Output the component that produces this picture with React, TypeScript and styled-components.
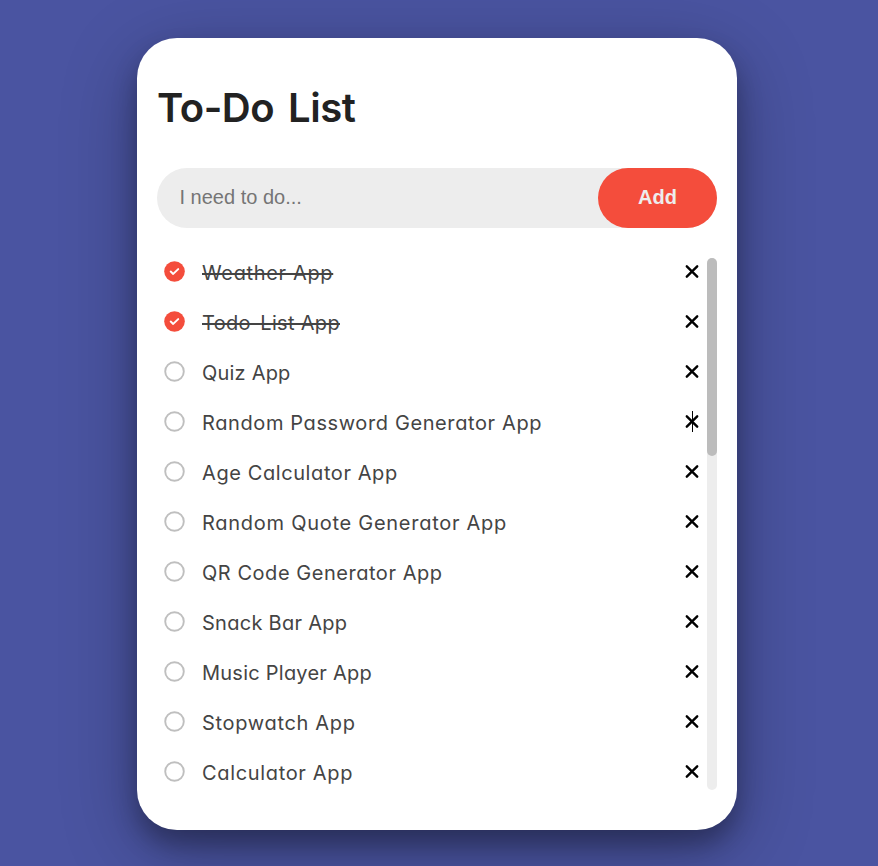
import React from "react";
import styled, { createGlobalStyle } from "styled-components";

const GlobalStyle = createGlobalStyle`
  * { box-sizing: border-box; }
  body { margin: 0; background: #4a54a1; overflow: hidden; }
`;

const Page = styled.main`
  height: 866px;
  padding-top: 38px;
  padding-left: 137px;
  background: #4a54a1;
  overflow: hidden;
  font-family: Inter, sans-serif;
  font-feature-settings: "cv11", "ss03";
`;

const Card = styled.section`
  width: 600px;
  height: 792px;
  padding: 40px 20px;
  display: flex;
  flex-direction: column;
  border-radius: 40px;
  background: #fff;
  box-shadow: 0 19px 76px rgba(0, 0, 0, 0.3), 0 15px 24px rgba(0, 0, 0, 0.27);
`;

const Title = styled.h1`
  margin: 0 0 30px;
  height: 60px;
  color: #222;
  font-size: 40px;
  line-height: 60px;
  font-weight: 600;
  letter-spacing: -0.5px;
  word-spacing: 4.5px;
  white-space: nowrap;
`;

const Form = styled.form`
  display: flex;
  flex: none;
  height: 60px;
  border-radius: 30px;
  background: #ededed;
`;

const TaskInput = styled.input`
  flex: 1;
  min-width: 0;
  padding: 0 0 2px 22.5px;
  border: 0;
  outline: 0;
  background: transparent;
  font: 20px "Liberation Sans", Arial, sans-serif;
  &::placeholder { color: #757575; opacity: 1; }
`;

const AddButton = styled.button`
  width: 119px;
  padding: 0 0 2px;
  border: 0;
  border-radius: 30px;
  background: #f44d3c;
  color: #ededed;
  font: bold 20px "Liberation Sans", Arial, sans-serif;
`;

const ListArea = styled.div`
  display: flex;
  height: 532px;
  margin-top: 30px;
`;

const Tasks = styled.ul`
  flex: 1;
  margin: 0;
  padding: 0;
  overflow: hidden;
  list-style: none;
`;

const Task = styled.li`
  display: flex;
  align-items: flex-start;
  height: 50px;
  padding-left: 7px;
  padding-right: 8px;
`;

const StatusIcon = styled.svg`
  flex: none;
  width: 21px;
  height: 21px;
  margin-top: 3px;
`;

const Label = styled.span<{ $done: boolean; $spacing: number }>`
  flex: 1;
  margin-left: 17px;
  color: #444;
  font-size: 20px;
  line-height: 30px;
  letter-spacing: ${(p) => p.$spacing}px;
  white-space: nowrap;
  text-decoration: ${(p) => (p.$done ? "line-through" : "none")};
  text-decoration-thickness: 2px;
`;

const RemoveButton = styled.button`
  position: relative;
  width: 14px;
  height: 21px;
  margin: 3px 0 0;
  padding: 0;
  border: 0;
  background: none;
  svg { display: block; }
`;

const Caret = styled.i`
  position: absolute;
  left: 7px;
  top: 0;
  width: 1px;
  height: 21px;
  background: #000;
`;

const Track = styled.div`
  width: 10px;
  border-radius: 5px;
  background: #ededed;
`;

const Thumb = styled.div`
  height: 198px;
  border-radius: 5px;
  background: #bcbcbc;
`;

type TaskData = { name: string; spacing: number; done?: boolean; caret?: boolean };

const tasks: TaskData[] = [
  { name: "Weather App", spacing: 0.65, done: true },
  { name: "Todo-List App", spacing: 0.31, done: true },
  { name: "Quiz App", spacing: 0.2 },
  { name: "Random Password Generator App", spacing: 0.61, caret: true },
  { name: "Age Calculator App", spacing: 0.59 },
  { name: "Random Quote Generator App", spacing: 0.73 },
  { name: "QR Code Generator App", spacing: 0.54 },
  { name: "Snack Bar App", spacing: 0.28 },
  { name: "Music Player App", spacing: 0.24 },
  { name: "Stopwatch App", spacing: 0.68 },
  { name: "Calculator App", spacing: 0.66 },
];

function Status({ done }: { done: boolean }) {
  return (
    <StatusIcon viewBox="0 0 21 21">
      {done ? (
        <>
          <circle cx="10.5" cy="10.5" r="10.3" fill="#f44d3c" />
          <path d="M6.7 10.6 9.2 12.9 14.2 8.1" fill="none" stroke="#fff" strokeWidth="2" strokeLinecap="round" strokeLinejoin="round" />
        </>
      ) : (
        <circle cx="10.5" cy="10.5" r="9.3" fill="none" stroke="#bfbfbf" strokeWidth="1.9" />
      )}
    </StatusIcon>
  );
}

export default function App() {
  return (
    <>
      <GlobalStyle />
      <Page>
        <Card>
          <Title>To-Do List</Title>
          <Form onSubmit={(e) => e.preventDefault()}>
            <TaskInput placeholder="I need to do..." />
            <AddButton>Add</AddButton>
          </Form>
          <ListArea>
            <Tasks>
              {tasks.map((t) => (
                <Task key={t.name}>
                  <Status done={!!t.done} />
                  <Label $done={!!t.done} $spacing={t.spacing}>{t.name}</Label>
                  <RemoveButton aria-label="Remove">
                    <svg width="14" height="21" viewBox="0 0 14 21">
                      <path d="M1.8 5.3 12.2 15.7M12.2 5.3 1.8 15.7" stroke="#000" strokeWidth="2.4" strokeLinecap="round" />
                    </svg>
                    {t.caret && <Caret />}
                  </RemoveButton>
                </Task>
              ))}
            </Tasks>
            <Track><Thumb /></Track>
          </ListArea>
        </Card>
      </Page>
    </>
  );
}
